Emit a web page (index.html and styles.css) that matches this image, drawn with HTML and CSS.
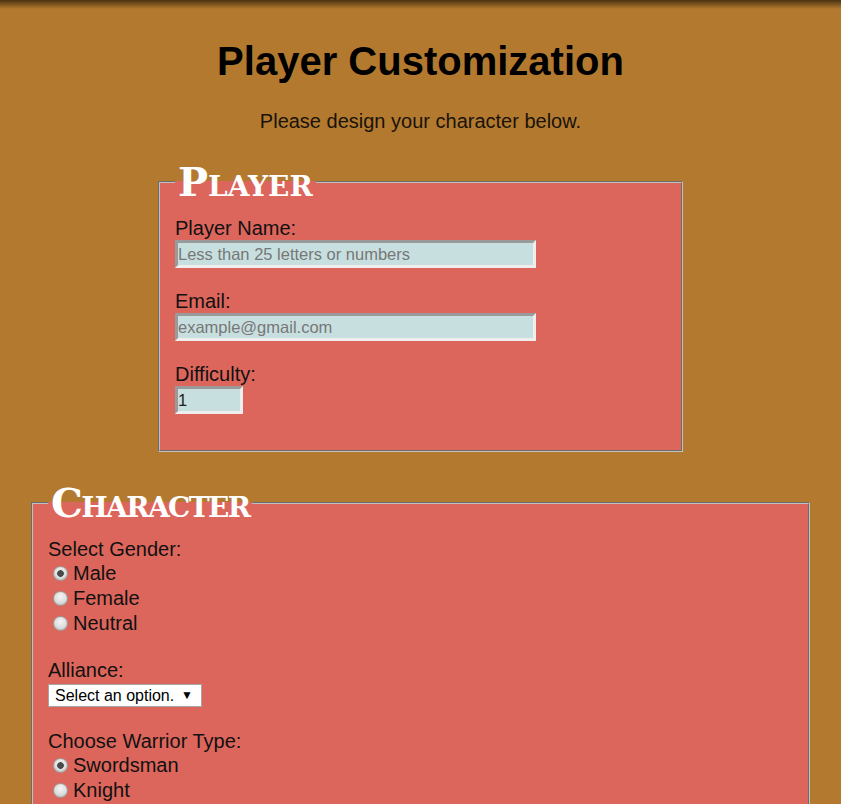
FILE: index.html
```html
<!DOCTYPE html>
<html lang="en">
<head>
<meta charset="utf-8">
<title>Player Customization</title>
<link rel="stylesheet" href="styles.css">
</head>
<body>
<h1 class="title">Player Customization</h1>
<p class="intro">Please design your character below.</p>
<form class="form">
  <fieldset class="panel panel-player">
    <legend class="panel-title">Player</legend>
    <div class="field">
      <label class="field-label" for="pname">Player Name:</label>
      <input class="text-input text-wide" id="pname" type="text" placeholder="Less than 25 letters or numbers">
    </div>
    <div class="field">
      <label class="field-label" for="pemail">Email:</label>
      <input class="text-input text-wide" id="pemail" type="text" placeholder="example@gmail.com">
    </div>
    <div class="field">
      <label class="field-label" for="pdiff">Difficulty:</label>
      <input class="text-input text-small" id="pdiff" type="text" value="1">
    </div>
  </fieldset>

  <fieldset class="panel panel-character">
    <legend class="panel-title panel-title-tight">Character</legend>
    <div class="field">
      <span class="field-label">Select Gender:</span>
      <label class="choice"><input class="radio" type="radio" name="gender" checked><span>Male</span></label>
      <label class="choice"><input class="radio" type="radio" name="gender"><span>Female</span></label>
      <label class="choice"><input class="radio" type="radio" name="gender"><span>Neutral</span></label>
    </div>
    <div class="field">
      <label class="field-label" for="alliance">Alliance:</label>
      <span class="select-wrap">
        <select class="select" id="alliance">
          <option>Select an option.</option>
          <option>Light</option>
          <option>Dark</option>
        </select>
      </span>
    </div>
    <div class="field">
      <span class="field-label">Choose Warrior Type:</span>
      <label class="choice"><input class="radio" type="radio" name="warrior" checked><span>Swordsman</span></label>
      <label class="choice"><input class="radio" type="radio" name="warrior"><span>Knight</span></label>
    </div>
  </fieldset>
</form>
</body>
</html>
```

FILE: styles.css
```css
html {
  background: linear-gradient(rgba(40, 25, 5, 0.75), rgba(40, 25, 5, 0) 9px) no-repeat, #b37a2f;
}

body {
  margin: 0;
  padding: 0 8px 40px;
  font-family: "Liberation Sans", Arial, sans-serif;
  color: #111;
}

.title {
  margin: 38px 0 0;
  font-size: 40px;
  line-height: 46px;
  font-weight: bold;
  text-align: center;
  color: #000;
}

.intro {
  margin: 26px 0 0;
  font-size: 20px;
  line-height: 23px;
  text-align: center;
  color: #1a1208;
}

.form {
  display: flex;
  flex-direction: column;
  align-items: center;
}

.panel {
  box-sizing: border-box;
  margin: 0;
  border: 2px groove #c0c0c0;
  background: #dd665c;
  padding: 15px 15px 35px;
  min-width: 0;
}

.panel-player {
  width: 525px;
  margin-top: 29px;
  padding-bottom: 36px;
}

.panel-player .field + .field {
  margin-top: 22px;
}

.panel-character {
  width: 779px;
  margin-top: 31px;
}

.panel-title {
  padding: 0 3px;
  font-family: "DejaVu Serif", "Liberation Serif", serif;
  font-weight: bold;
  font-size: 40px;
  line-height: 40px;
  font-variant: small-caps;
  color: #fff;
}

.panel-title-tight {
  letter-spacing: -1.6px;
}

.field {
  display: flex;
  flex-direction: column;
  align-items: flex-start;
}

.field + .field {
  margin-top: 23px;
}

.field-label {
  font-size: 20px;
  line-height: 23px;
}

.text-input {
  box-sizing: border-box;
  height: 28px;
  margin: 0;
  padding: 0;
  border: 3px solid;
  border-color: #9a9a9a #eeeeee #eeeeee #9a9a9a;
  background: #c8dfe0;
  font-family: "Liberation Sans", Arial, sans-serif;
  font-size: 16.5px;
  color: #222;
  outline: none;
}

.text-input::placeholder {
  color: #777;
}

.text-wide {
  width: 361px;
}

.text-small {
  width: 68px;
}

.choice {
  display: flex;
  align-items: center;
  height: 25px;
  font-size: 20px;
  line-height: 23px;
}

.radio {
  appearance: none;
  -webkit-appearance: none;
  box-sizing: border-box;
  width: 15px;
  height: 15px;
  margin: 0 5px 0 5px;
  border: 1px solid #9b9b9b;
  border-radius: 50%;
  background: radial-gradient(circle at 50% 35%, #f4f4f4 0, #dcdcdc 60%, #c4c4c4 100%);
  box-shadow: inset 0 -1px 1px rgba(0, 0, 0, 0.08);
}

.radio:checked {
  background: radial-gradient(circle at 50% 50%, #4a4a4a 0, #4a4a4a 3px, transparent 3.7px),
    radial-gradient(circle at 50% 35%, #f4f4f4 0, #dcdcdc 60%, #c4c4c4 100%);
}

.select-wrap {
  position: relative;
  display: inline-block;
  margin-top: 2px;
}

.select-wrap::after {
  content: "\25BC";
  position: absolute;
  right: 9px;
  top: 5px;
  font-size: 12px;
  line-height: 13px;
  color: #000;
  pointer-events: none;
}

.select {
  appearance: none;
  -webkit-appearance: none;
  box-sizing: border-box;
  width: 154px;
  height: 23px;
  margin: 0;
  padding: 0 0 0 6px;
  border: 1px solid #a6a6a6;
  border-radius: 0;
  background: #fff;
  font-family: "Liberation Sans", Arial, sans-serif;
  font-size: 16px;
  color: #000;
}
```
